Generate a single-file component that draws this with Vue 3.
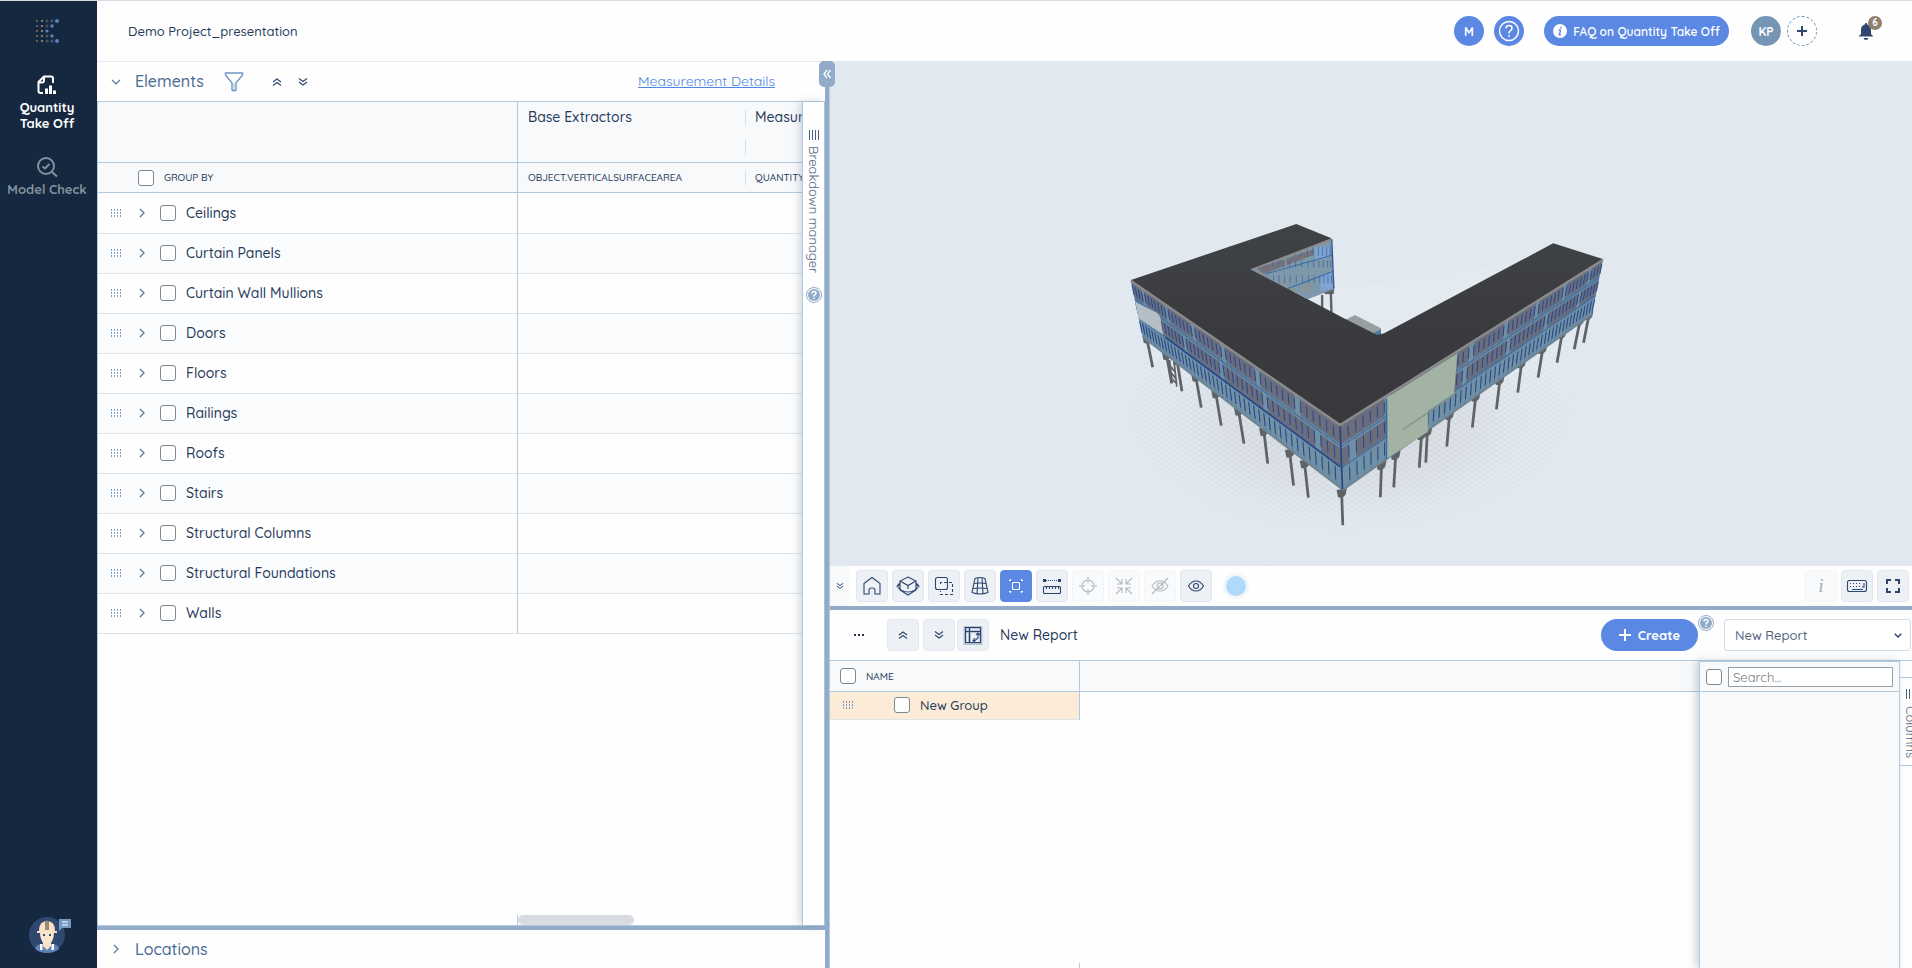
<template>
  <div class="app">
    <nav class="sidebar">
      <svg class="logo" viewBox="0 0 24 24" aria-hidden="true">
        <circle v-for="dot in logoDots" :key="dot.id" :cx="dot.x" :cy="dot.y" :r="dot.r" :fill="dot.color" />
      </svg>
      <a href="#" class="nav-item active">
        <svg width="20" height="20" viewBox="0 0 20 20" aria-hidden="true">
          <path d="M6 18H3.500Q1.500 18 1.500 16V7L7 1.500H14Q16 1.500 16 3.500V8M1.500 7.500H5Q7 7.500 7 5.500V2" fill="none" stroke="#fff" stroke-width="2" />
          <path d="M8 13.500h3V19H8zM12 10.500h3V19h-3zM16 15.500h3V19h-3z" fill="#fff" />
        </svg>
        <span>Quantity Take Off</span>
      </a>
      <a href="#" class="nav-item check">
        <svg width="22" height="20" viewBox="0 0 22 20" fill="none" stroke="currentColor" stroke-width="2" aria-hidden="true">
          <circle cx="10" cy="9" r="8" />
          <path d="M16 15l5 4.500M6.500 9.500l2.500 2 4.500-4.500" />
        </svg>
        <span>Model Check</span>
      </a>
      <button class="assistant" aria-label="Assistant">
        <svg width="44" height="40" viewBox="0 0 44 40">
          <circle cx="19" cy="20" r="18" fill="#2f4870" />
          <path d="M7 34Q8 29 14 29h10q6 0 7 5-5 4-12 4T7 34z" fill="#5c83b8" />
          <path d="M12 29h2.500v6H12zM23.500 29H26v6h-2.500z" fill="#fff" />
          <path d="M15 25h8v6l-4 4-4-4z" fill="#f9dfc5" />
          <path d="M12 17h14q0 8-4 12l-3 2-3-2q-4-4-4-12z" fill="#fce5ce" />
          <path d="M11 16Q11 6 19 6t8 10h2v2H9v-2z" fill="#fbe0c3" />
          <path d="M17 6q2-1 4 0v9h-4z" fill="#998876" />
          <path d="M15 19h2v2h-2zM21 19h2v2h-2z" fill="#385078" />
          <path d="M31 4h12v9H34l-3 3z" fill="#7599c2" />
          <path d="M34 7h6M34 10h6" stroke="#fff" />
        </svg>
      </button>
    </nav>

    <header class="topbar">
      <span class="project">Demo Project_presentation</span>
      <div class="top-actions">
        <button class="round blue">M</button>
        <button class="round blue" aria-label="Help">
          <svg width="22" height="22" viewBox="0 0 22 22" fill="none" stroke="#fff" stroke-width="1.500">
            <circle cx="11" cy="11" r="9.500" />
            <path d="M8 8.500Q8 5.500 11 5.500t3 2.700Q14 10 12 11q-1 .7-1 2.500M11 15v1.700" />
          </svg>
        </button>
        <button class="faq">
          <svg width="14" height="14" viewBox="0 0 14 14" aria-hidden="true">
            <circle cx="7" cy="7" r="7" fill="#fff" />
            <path d="M8 3l-.3 1.500M7.500 6l-1 4.500M5.700 6h2M5.500 10.700h2.300" stroke="#5a88e3" stroke-width="1.400" fill="none" />
          </svg>
          FAQ on Quantity Take Off
        </button>
        <button class="round user">KP</button>
        <button class="round add" aria-label="Add user">
          <svg width="10" height="10" viewBox="0 0 10 10"><path d="M5 0v10M0 5h10" stroke="#2f486f" stroke-width="2" /></svg>
        </button>
        <button class="bell" aria-label="Notifications">
          <svg width="16" height="17" viewBox="0 0 16 17" fill="#2e466e">
            <path d="M8 0q1.200 0 1.200 1.400Q13 2.500 13 7v4l2.500 2.500H.5L3 11V7Q3 2.500 6.800 1.400 6.800 0 8 0zM5.500 15h5q-.5 2-2.500 2t-2.500-2z" />
          </svg>
          <span class="badge">6</span>
        </button>
      </div>
    </header>

    <section class="left-pane">
      <div class="pane-head">
        <button class="bare" aria-label="Collapse elements">
          <svg width="10" height="6" viewBox="0 0 10 6" class="line-icon"><path d="M1 1l4 4 4-4" /></svg>
        </button>
        <h2>Elements</h2>
        <button class="bare filter" aria-label="Filter">
          <svg width="20" height="20" viewBox="0 0 20 20" fill="none" stroke="#6f97c4" stroke-width="1.400">
            <path d="M1.500 1h17v2L12 11v7l-2 1-2-1v-7L1.500 3z" />
            <path d="M10 11v7" stroke="#a9d3f2" />
          </svg>
        </button>
        <button class="bare up" aria-label="Collapse all"><svg width="10" height="8" viewBox="0 0 10 8" class="double"><path :d="doubleUp" /></svg></button>
        <button class="bare" aria-label="Expand all"><svg width="10" height="8" viewBox="0 0 10 8" class="double"><path :d="doubleDown" /></svg></button>
        <a href="#" class="details">Measurement Details</a>
      </div>

      <div class="elements-body">
        <div class="table-wrap">
          <table class="elements">
            <colgroup>
              <col class="col-name" />
              <col class="col-base" />
              <col />
            </colgroup>
            <thead>
              <tr class="groups">
                <th></th>
                <th>Base Extractors</th>
                <th class="ticked">Measurements</th>
              </tr>
              <tr class="fields">
                <th>
                  <label class="group-by"><input type="checkbox" /> GROUP BY</label>
                </th>
                <th>OBJECT.VERTICALSURFACEAREA</th>
                <th class="ticked">QUANTITY</th>
              </tr>
            </thead>
            <tbody>
              <tr v-for="name in elements" :key="name">
                <td>
                  <div class="row-name">
                    <svg width="12" height="8" viewBox="0 0 12 8" class="grip"><path :d="grip" /></svg>
                    <button class="bare" :aria-label="'Expand ' + name">
                      <svg width="6" height="10" viewBox="0 0 6 10" class="line-icon"><path d="M1 1l4 4-4 4" /></svg>
                    </button>
                    <label><input type="checkbox" /> {{ name }}</label>
                  </div>
                </td>
                <td></td>
                <td></td>
              </tr>
            </tbody>
          </table>
          <div class="scroll-row"><div class="thumb"></div></div>
        </div>
        <div class="side-tab">
          <svg width="10" height="10" viewBox="0 0 10 10" class="bars"><path d="M.5 0v10M3.500 0v10M6.500 0v10M9.500 0v10" /></svg>
          <button class="vertical">Breakdown manager</button>
          <button class="bare" aria-label="Breakdown manager help">
            <svg width="16" height="16" viewBox="0 0 16 16"><circle cx="8" cy="8" r="7.500" fill="#fff" stroke="#92abc8" /><circle cx="8" cy="8" r="6" fill="#92abc8" /><path :d="question" class="question" /></svg>
          </button>
        </div>
      </div>

      <div class="split-h"></div>
      <div class="locations">
        <button class="bare" aria-label="Expand locations">
          <svg width="6" height="10" viewBox="0 0 6 10" class="line-icon"><path d="M1 1l4 4-4 4" /></svg>
        </button>
        <h2>Locations</h2>
      </div>
    </section>

    <div class="split-v">
      <button class="collapse" aria-label="Collapse panel">
        <svg width="8" height="10" viewBox="0 0 8 10" fill="none" stroke="#fff" stroke-width="1.300"><path d="M4 1L1 5l3 4M7.500 1l-3 4 3 4" /></svg>
      </button>
    </div>

    <section class="right-pane">
      <div class="viewer">
        <svg viewBox="0 0 1082 504" role="img" aria-label="Building model">
          <defs>
            <radialGradient id="shade">
              <stop offset="0" stop-color="#d4d8dd" />
              <stop offset=".55" stop-color="#dbe0e5" stop-opacity=".8" />
              <stop offset="1" stop-color="#e3eaf1" stop-opacity="0" />
            </radialGradient>
            <radialGradient id="glow">
              <stop offset=".4" stop-color="#e6eff6" />
              <stop offset="1" stop-color="#e2e9f0" stop-opacity="0" />
            </radialGradient>
            <radialGradient id="fade">
              <stop offset="0" stop-color="#fff" />
              <stop offset=".5" stop-color="#fff" stop-opacity=".55" />
              <stop offset="1" stop-color="#fff" stop-opacity="0" />
            </radialGradient>
            <pattern id="grid" width="24" height="16" patternUnits="userSpaceOnUse">
              <path d="M0 0L24 16M24 0L0 16" stroke="#adb3bc" stroke-width="1.500" fill="none" />
            </pattern>
            <mask id="gridMask"><ellipse cx="730" cy="620" rx="820" ry="430" fill="url(#fade)" /></mask>
            <linearGradient id="roof" x1="0" y1="0" x2="0" y2="1">
              <stop offset="0" stop-color="#404345" />
              <stop offset=".5" stop-color="#3a3b3f" />
              <stop offset="1" stop-color="#37393b" />
            </linearGradient>
            <clipPath id="backClip"><path d="M438 207L672 117 680 268 604 298z" /></clipPath>
          </defs>
          <g transform="translate(270 138) scale(.3444 .3333)">
            <ellipse cx="730" cy="620" rx="950" ry="520" fill="url(#glow)" />
            <ellipse cx="720" cy="660" rx="680" ry="380" fill="url(#shade)" />
            <rect x="-200" y="200" width="1900" height="850" fill="url(#grid)" mask="url(#gridMask)" opacity=".7" />
            <path d="M604 298L690 268 1200 190 820 410z" fill="#e4ebf1" opacity=".8" />

            <g stroke="#5f6365" fill="#5f6365">
              <g v-for="(c, i) in columns" :key="i">
                <path :d="`M${c[0]} ${c[1]}L${c[2]} ${c[3]}`" stroke-width="8" />
                <path :d="`M${c[0] - 15} ${c[1] - 18}l30 -6 -4 20 -10 10 -12 -2z`" stroke="none" />
              </g>
              <path d="M202 480l8 70M215 485l8 75M206 500l12 16M208 520l12 16M210 538l12 12" stroke-width="5" />
              <path d="M645 285V325M670 270L672 338" stroke-width="7" />
              <path d="M650 270l30 -6 -2 18h-25z" />
            </g>

            <g clip-path="url(#backClip)">
              <path d="M438 207L672 117 680 268 604 298z" fill="#7c98aa" />
              <path d="M455 205L620 148 620 165 475 222z" fill="#74737c" />
              <path d="M530 235h12v22h-12zM595 250h14v25h-14zM550 265h12v20h-12zM535 175h6v25h-6z" fill="#94928a" />
              <path d="M625 140h45v30l-45 12zM640 225l35-10v50l-35 10z" fill="#7fa4d1" />
              <path d="M480 222L676 165M540 268L678 214" class="floor-line" />
              <path v-for="x in backMullions" :key="x" :d="`M${x} 140v28m2 14v20m2 24v24`" stroke="#3a63a0" stroke-width="2" />
            </g>
            <path d="M438 207L672 117" stroke="#8f8b89" stroke-width="8" />
            <path d="M673 118L679 265" stroke="#2f569c" stroke-width="4" />

            <path d="M712 360L740 345 816 385 814 405 795 408z" fill="#999fa1" />
            <path d="M790 402L816 388V406H798z" fill="#4d78a8" />

            <g v-for="face in faces" :key="face.id">
              <path :d="face.outline" fill="#7290a3" />
              <path :d="face.rooms" fill="#6b6d7b" />
              <path :d="face.glints" fill="#6e93a6" />
              <path :d="face.mullions" stroke="#4577ab" stroke-width="2" stroke-opacity=".8" fill="none" />
              <path :d="face.darkMullions" stroke="#2b4788" stroke-width="3" fill="none" />
              <path :d="face.floors" class="floor-line" />
              <path :d="face.base" stroke="#6f8394" stroke-width="5" fill="none" />
            </g>
            <path d="M190 412L697 800" stroke="#26468a" stroke-width="5" />
            <path d="M697 675L704 868" stroke="#254788" stroke-width="5" />
            <path d="M102 305L165 338Q176 345 177 365L184 405 112 355z" fill="#b4bfc5" />
            <path d="M834 592L1038 460 1028 580 952 633V695L834 775z" fill="#a3b3a3" />
            <path d="M878 690L1028 585" stroke="#858f89" stroke-width="4" />
            <path d="M832 598V778" stroke="#3769ad" stroke-width="4" />

            <path d="M90 240L570 72 672 115 438 207 708 355 805 405 825 400 1316 130 1460 177 697 672z" fill="url(#roof)" />
            <path d="M90 243L697 675 1460 180" fill="none" stroke="#8b8989" stroke-width="7" />
            <path d="M438 207L500 240" stroke="#8b8989" stroke-width="4" />
          </g>
        </svg>
      </div>

      <div class="toolbar">
        <button class="toggle" aria-label="Hide toolbar"><svg width="8" height="8" viewBox="0 0 10 8" class="double"><path :d="doubleDown" /></svg></button>
        <button class="tool" aria-label="Home"><svg viewBox="0 0 24 24"><path d="M4 9.500L12 3.500l8 6V20h-5v-4q0-2-3-2t-3 2v4H4z" /></svg></button>
        <button class="tool" aria-label="Section box"><svg viewBox="0 0 24 24"><path d="M12 3l8 4v9l-8 5-8-5V7zM4 7l8 4.500L20 7M12 11.500V15M4 9L1 12q4 6 11 6t11-6l-3-3M1 12l3-1M23 12l-3-1" /></svg></button>
        <button class="tool" aria-label="Select area"><svg viewBox="0 0 24 24"><rect x="3.500" y="3.500" width="12" height="12" rx="2" /><path d="M8.500 10V8.500H20.500V20.500H8.500V17" stroke-dasharray="3 2" /></svg></button>
        <button class="tool" aria-label="Grid"><svg viewBox="0 0 24 24"><path d="M7 4.500Q12 2.500 17 4.500L20 18.500q-8 3-16 0zM6 9.500q6-1 12 0M5 14.500q7-1 14 0M10 4L9 20M14 4l1 16" /></svg></button>
        <button class="tool selected" aria-label="Isolate"><svg viewBox="0 0 24 24"><rect x="8.500" y="8.500" width="7" height="7" rx="1" /><path d="M5 6.500h1.500V5M19 6.500h-1.500V5M5 17.500h1.500V19M19 17.500h-1.500V19" /></svg></button>
        <button class="tool" aria-label="Measure"><svg viewBox="0 0 24 24"><rect x="3.500" y="12.500" width="17" height="7" rx="1" /><path d="M6.500 12v3M9.500 12v3M12.500 12v3M15.500 12v3M18.500 12v3" /><path d="M6 6.500h12" stroke-dasharray="1 1" /><path d="M3 5h3v3H3zM18 5h3v3h-3z" fill="currentColor" stroke="none" /></svg></button>
        <button class="tool" disabled aria-label="Locate"><svg viewBox="0 0 24 24"><circle cx="12" cy="12" r="6" /><path d="M12 3v6M12 15v6M3 12h6M15 12h6" /></svg></button>
        <button class="tool" disabled aria-label="Fit"><svg viewBox="0 0 24 24"><path d="M4 4l6 6M20 4l-6 6M4 20l6-6M20 20l-6-6M10 5v5H5M14 5v5h5M5 14h5v5M19 14h-5v5" /></svg></button>
        <button class="tool" disabled aria-label="Hide"><svg viewBox="0 0 24 24"><path d="M4 12q3-5 8-5t8 5q-3 5-8 5t-8-5zM4 20L20 4" /><circle cx="12" cy="12" r="3" /></svg></button>
        <button class="tool" aria-label="Show"><svg viewBox="0 0 24 24"><path d="M4.500 12q3-5 7.500-5t7.500 5q-3 5-7.500 5t-7.500-5z" /><circle cx="12" cy="12" r="2.500" /></svg></button>
        <button class="swatch" aria-label="Colour"></button>
        <button class="tool info" disabled aria-label="Info">i</button>
        <button class="tool" aria-label="Keyboard"><svg viewBox="0 0 24 24"><rect x="2.500" y="6.500" width="19" height="11" rx="2" /><path d="M5 9.500h12M5 12.500h12" stroke-dasharray="1 2" /><path d="M7 15.500h11M19 9v4h-2" /></svg></button>
        <button class="tool" aria-label="Fullscreen"><svg viewBox="0 0 24 24"><path d="M6 10V6h4M14 6h4v4M18 14v4h-4M10 18H6v-4" stroke-width="2" /></svg></button>
      </div>

      <div class="split-h"></div>

      <div class="report-bar">
        <button class="bare more" aria-label="More"><svg width="10" height="2" viewBox="0 0 10 2"><path d="M0 0h2v2H0zM4 0h2v2H4zM8 0h2v2H8z" fill="#26334d" /></svg></button>
        <button class="tool" aria-label="Collapse report"><svg class="double small" viewBox="0 0 10 8"><path :d="doubleUp" /></svg></button>
        <button class="tool" aria-label="Expand report"><svg class="double small" viewBox="0 0 10 8"><path :d="doubleDown" /></svg></button>
        <button class="tool pivot" aria-label="Pivot"><svg viewBox="0 0 24 24"><path d="M4 4.500h16v16H4zM4 8.500h16M8.500 4v16" stroke="#b4c2d6" stroke-width="3" /><path d="M4.500 4.500h15v15h-15zM4.500 8.500h15M8.500 4.500v15" /><path d="M17 10.500v4.500l-3 2.500h-2M15 12l2-2 2 2M14 15l-2 2.500 2 2" /></svg></button>
        <span class="report-title">New Report</span>
        <button class="create">
          <svg width="12" height="12" viewBox="0 0 12 12"><path d="M6 0v12M0 6h12" stroke="#fff" stroke-width="2" /></svg>
          Create
        </button>
        <button class="bare report-help" aria-label="Report help">
          <svg width="16" height="16" viewBox="0 0 16 16"><circle cx="8" cy="8" r="7.500" fill="#fff" stroke="#92abc8" /><circle cx="8" cy="8" r="6" fill="#92abc8" /><path :d="question" class="question" /></svg>
        </button>
        <div class="select-wrap">
          <select v-model="report" aria-label="Report">
            <option>New Report</option>
          </select>
          <svg width="8" height="5" viewBox="0 0 8 5" fill="none" stroke="#26406b" stroke-width="1.400"><path d="M.8.8L4 4 7.200.8" /></svg>
        </div>
      </div>

      <div class="report-body">
        <div class="report-grid">
          <table class="report">
            <colgroup>
              <col class="col-report" />
              <col />
            </colgroup>
            <thead>
              <tr>
                <th><label><input type="checkbox" /> NAME</label></th>
                <th></th>
              </tr>
            </thead>
            <tbody>
              <tr>
                <td>
                  <div class="row-name">
                    <svg width="12" height="8" viewBox="0 0 12 8" class="grip"><path :d="grip" /></svg>
                    <label><input type="checkbox" /> New Group</label>
                  </div>
                </td>
                <td></td>
              </tr>
            </tbody>
          </table>
          <div class="report-foot"></div>
        </div>
        <aside class="columns-panel">
          <div class="search-row">
            <input type="checkbox" aria-label="Select all columns" />
            <input v-model="search" type="text" class="search" placeholder="Search..." aria-label="Search columns" />
          </div>
        </aside>
        <div class="columns-rail">
          <div class="columns-tab">
            <svg width="10" height="10" viewBox="0 0 10 10" class="bars"><path d="M.5 0v10M3.500 0v10M6.500 0v10M9.500 0v10" /></svg>
            <button class="vertical">Columns</button>
          </div>
        </div>
      </div>
    </section>
  </div>
</template>

<script setup>
import { ref } from "vue";

const report = ref("New Report");
const search = ref("");

const elements = [
  "Ceilings",
  "Curtain Panels",
  "Curtain Wall Mullions",
  "Doors",
  "Floors",
  "Railings",
  "Roofs",
  "Stairs",
  "Structural Columns",
  "Structural Foundations",
  "Walls",
];

const doubleUp = "M1 4l4-3 4 3M1 7.500l4-3 4 3";
const doubleDown = "M1 .5l4 3 4-3M1 4l4 3 4-3";
const question = "M6 6.500Q6 4.500 8 4.500t2 1.800Q10 7.500 8 8.500v1M8 10.500v1.500";
const grip = [0, 3, 6].map((y) => [0, 3, 6, 9].map((x) => `M${x + 1.5} ${y}v2`).join("")).join("");

const logoStyles = [
  { r: 0.8, color: "#c9a978" },
  { r: 1.1, color: "#a38c72" },
  { r: 1.6, color: "#4c505a" },
  { r: 1.7, color: "#46536a" },
  { r: 2, color: "#5a83b6" },
];
const logoRows = [5, 4, 3, 4, 5];
const logoDots = logoRows.flatMap((count, row) =>
  logoStyles.slice(0, count).map((style, col) => ({
    id: `${row}-${col}`,
    x: 2 + col * 5,
    y: 2 + row * 5,
    r: style.r,
    color: col === count - 1 ? "#5a83b6" : style.color,
  }))
);

const backMullions = [480, 500, 516, 532, 548, 566, 584, 602, 618, 634, 646, 658, 668];

// x/y of the head and of the foot of each column
const columns = [
  [138, 425, 153, 502],
  [195, 475, 208, 550],
  [225, 490, 238, 574],
  [280, 540, 294, 623],
  [338, 590, 352, 677],
  [404, 642, 418, 731],
  [477, 703, 487, 791],
  [552, 768, 562, 857],
  [595, 800, 605, 893],
  [702, 888, 705, 976],
  [817, 805, 814, 892],
  [858, 775, 853, 862],
  [933, 715, 927, 803],
  [950, 705, 946, 788],
  [1014, 655, 1007, 740],
  [1090, 600, 1081, 683],
  [1160, 550, 1151, 628],
  [1223, 500, 1213, 578],
  [1284, 457, 1272, 533],
  [1340, 412, 1327, 488],
  [1392, 372, 1377, 448],
  [1418, 355, 1404, 428],
];

// Builds the path data of a glazed facade: a and b are the far top and bottom, c and d the near ones
const facade = (id, a, b, c, d, count) => {
  const depth = 1.55;
  const mix = (from, to, t) => from + (to - from) * t;
  const point = (u, v) => {
    // spacing widens towards the near corner
    const p = u / (u + (1 - u) * depth);
    const x = mix(mix(a[0], c[0], p), mix(b[0], d[0], p), v);
    const y = mix(mix(a[1], c[1], p), mix(b[1], d[1], p), v);
    return `${x.toFixed(1)} ${y.toFixed(1)}`;
  };
  const line = (u0, v0, u1, v1) => `M${point(u0, v0)}L${point(u1, v1)}`;
  const cell = (u0, u1, v0, v1) =>
    `M${point(u0, v0)}L${point(u1, v0)}L${point(u1, v1)}L${point(u0, v1)}z`;

  let rooms = "";
  let glints = "";
  let mullions = "";
  let darkMullions = "";
  for (let i = 0; i < count; i++) {
    const u0 = i / count;
    const u1 = (i + 1) / count;
    if (i % 7 !== 3) rooms += cell(u0, u1, 0.03, 0.31);
    if (i % 9 !== 5) rooms += cell(u0, u1, 0.38, 0.65);
    if (i % 4 === 1) glints += cell(u0, u1, 0.68, 0.92);
    mullions += line(u0, 0, u0, 1);
    darkMullions += line(u0, 0.09, u0, 0.26) + line(u0, 0.4, u0, 0.58) + line(u0, 0.72, u0, 0.92);
  }
  return {
    id,
    outline: cell(0, 1, 0, 1),
    rooms,
    glints,
    mullions,
    darkMullions,
    floors: line(0, 0.34, 1, 0.34) + line(0, 0.66, 1, 0.66),
    base: line(0, 1, 1, 1),
  };
};

const faces = [
  facade("west", [90, 240], [125, 412], [697, 672], [705, 870], 45),
  facade("south", [1460, 177], [1427, 345], [697, 672], [705, 870], 52),
];
</script>

<style>
body {
  margin: 0;
}
</style>

<style scoped>
.app {
  display: grid;
  grid-template-columns: 97px minmax(0, 728fr) 5px minmax(0, 1082fr);
  grid-template-rows: 62px minmax(0, 1fr);
  height: 100vh;
  box-sizing: border-box;
  overflow: hidden;
  background: #fefefe;
  color: #25395a;
  font-family: Quicksand, Lato, "Open Sans", sans-serif;
  font-size: 14px;
  font-weight: 500;
}

.app *,
.app *::before {
  box-sizing: border-box;
}

button {
  padding: 0;
  border: none;
  background: none;
  font: inherit;
  color: inherit;
  display: flex;
  align-items: center;
  justify-content: center;
  cursor: pointer;
}

h2 {
  margin: 0;
  font-size: 16px;
  font-weight: 500;
  color: #476a92;
}

input[type="checkbox"] {
  appearance: none;
  flex: none;
  width: 16px;
  height: 16px;
  margin: 0;
  border: 1px solid #7b8791;
  border-radius: 3px;
  background: #fff;
}

label {
  display: flex;
  align-items: center;
}

/* Sidebar */
.sidebar {
  grid-row: 1 / 3;
  display: flex;
  flex-direction: column;
  align-items: center;
  border-top: 1px solid #d5dae0;
  background: #152840;
  padding: 18px 3px 13px 0;
}

.logo {
  width: 24px;
  height: 24px;
  margin-bottom: 32px;
}

.nav-item {
  display: flex;
  flex-direction: column;
  align-items: center;
  gap: 4px;
  width: 90px;
  text-align: center;
  text-decoration: none;
  font-size: 13px;
  line-height: 16px;
  font-weight: 700;
  color: #fff;
}

.active span {
  width: 64px;
}

.check {
  margin-top: 26px;
  color: #81929d;
}

.assistant {
  margin-top: auto;
  padding-left: 6px;
}

/* Top bar */
.topbar {
  grid-column: 2 / 5;
  display: flex;
  align-items: center;
  justify-content: space-between;
  border-top: 1px solid #d5dae0;
  border-bottom: 1px solid #e6eaee;
  padding: 0 30px 0 31px;
}

.project {
  font-size: 13px;
}

.top-actions {
  display: flex;
  align-items: center;
}

.round {
  width: 30px;
  height: 30px;
  border-radius: 50%;
  font-size: 12px;
  font-weight: 700;
  color: #fff;
}

.blue {
  margin-right: 10px;
  background: #5a88e3;
}

.faq {
  width: 185px;
  height: 30px;
  gap: 6px;
  margin: 0 22px 0 10px;
  border-radius: 15px;
  background: #5a88e3;
  color: #fff;
  font-size: 12px;
  font-weight: 600;
  white-space: nowrap;
}

.user {
  margin-right: 6px;
  background: #7694b4;
}

.add {
  border: 1px dashed #6f93b9;
}

.bell {
  position: relative;
  width: 24px;
  height: 30px;
  margin-left: 41px;
  justify-content: flex-start;
}

.badge {
  position: absolute;
  top: 0;
  right: 0;
  width: 14px;
  height: 14px;
  border-radius: 50%;
  background: #8f8072;
  color: #fff;
  font-size: 10px;
  line-height: 14px;
  font-weight: 700;
}

/* Elements pane */
.left-pane {
  display: flex;
  flex-direction: column;
  min-height: 0;
}

.pane-head {
  display: flex;
  align-items: center;
  height: 39px;
  padding: 0 50px 0 14px;
}

.pane-head h2 {
  margin-left: 14px;
  padding-bottom: 2px;
}

.filter {
  margin: 0 28px 0 20px;
}

.up {
  margin-right: 16px;
}

.details {
  margin-left: auto;
  padding-bottom: 2px;
  font-weight: 400;
  color: #4d87e2;
}

.line-icon {
  fill: none;
  stroke: #5b7690;
  stroke-width: 1.2;
}

.double {
  fill: none;
  stroke: #2e4a77;
  stroke-width: 1.2;
}

.elements-body {
  flex: 1;
  display: flex;
  min-height: 0;
  border: 1px solid #b2cadd;
}

.table-wrap {
  flex: 1;
  display: flex;
  flex-direction: column;
  min-width: 0;
  overflow: hidden;
}

table {
  width: 100%;
  table-layout: fixed;
  border-collapse: separate;
  border-spacing: 0;
}

th,
td {
  padding: 0;
  text-align: left;
  font-weight: 500;
  white-space: nowrap;
}

.col-name {
  width: 420px;
}

.col-base {
  width: 227px;
}

.elements th {
  position: relative;
  background: #f8f9fb;
  border-bottom: 1px solid #b2cadd;
}

.elements th:first-child,
.elements td:first-child {
  border-right: 1px solid #b2cadd;
}

.elements th + th {
  padding-left: 10px;
}

.elements .groups th {
  height: 61px;
  padding-bottom: 31px;
}

.fields th {
  height: 30px;
  font-size: 10px;
}

.ticked::before {
  content: "";
  position: absolute;
  left: 0;
  top: 8px;
  bottom: 7px;
  width: 1px;
  background: #d2dde8;
}

.groups .ticked::before {
  background: linear-gradient(#d2dde8 15px, transparent 15px 30px, #d2dde8 30px);
}

.group-by {
  gap: 10px;
  padding-left: 40px;
}

.elements td {
  height: 40px;
  padding-bottom: 1px;
  border-bottom: 1px solid #dae5ee;
}

.elements tbody tr:first-child td {
  height: 41px;
}

.elements tbody tr:nth-child(even) {
  background: #fbfcfd;
}

.row-name {
  display: flex;
  align-items: center;
  padding-left: 12px;
}

.row-name .bare {
  width: 6px;
  margin: 0 15px 0 17px;
}

.row-name label {
  gap: 10px;
}

.grip {
  fill: none;
  stroke: #7d9cc2;
  stroke-width: 1;
}

.scroll-row {
  margin: auto 0 0 419px;
  height: 10px;
  border-left: 1px solid #b2cadd;
}

.thumb {
  width: 116px;
  height: 10px;
  border-radius: 5px;
  background: #d8dce2;
}

.side-tab {
  flex: none;
  position: relative;
  display: flex;
  flex-direction: column;
  align-items: center;
  width: 22px;
  padding-top: 28px;
  gap: 6px;
  border-left: 1px solid #b2cadd;
  background: #fefefe;
  box-shadow: -2px 0 8px rgba(100, 130, 160, 0.35);
}

.bars {
  flex: none;
  stroke: #48617e;
}

.vertical {
  writing-mode: vertical-rl;
  color: #52677f;
  line-height: 18px;
  font-size: 13px;
  font-weight: 400;
}

.side-tab .bare {
  margin-top: 8px;
}

.question {
  fill: none;
  stroke: #fff;
  stroke-width: 1.4;
}

.split-h {
  flex: none;
  height: 4px;
  background: #92abc8;
}

.locations {
  display: flex;
  align-items: center;
  gap: 16px;
  height: 38px;
  padding-left: 16px;
}

/* Vertical splitter */
.split-v {
  position: relative;
  background: #92abc8;
  border-right: 1px solid #b8cadb;
}

.collapse {
  position: absolute;
  left: -6px;
  top: -1px;
  z-index: 2;
  width: 16px;
  height: 26px;
  border-radius: 5px;
  background: #92abc8;
}

/* Viewer */
.right-pane {
  display: flex;
  flex-direction: column;
  min-width: 0;
  min-height: 0;
}

.viewer {
  flex: 504;
  min-height: 0;
  overflow: hidden;
  background: #e1e8ef;
}

.viewer svg {
  display: block;
  width: 100%;
  height: 100%;
}

.floor-line {
  fill: none;
  stroke: #3c6aa3;
  stroke-width: 3;
}

.toolbar {
  flex: none;
  display: flex;
  align-items: center;
  gap: 4px;
  height: 40px;
  padding-right: 3px;
}

.toggle {
  width: 19px;
  height: 40px;
  margin-right: 3px;
  background: #f7f9fb;
}

.tool {
  flex: none;
  width: 32px;
  height: 32px;
  border: 1px solid #e1e8ef;
  border-radius: 4px;
  background: #edf0f5;
  color: #2e466e;
}

.tool svg {
  width: 24px;
  height: 24px;
  fill: none;
  stroke: currentColor;
  stroke-width: 1.1;
}

.tool .small {
  width: 10px;
  height: 8px;
}

.tool:disabled {
  background: #f9fafc;
  border-color: #f3f6f9;
  color: #b3bac3;
}

.tool.selected {
  border-color: #5a88e3;
  background: #5a88e3;
  color: #fff;
}

.swatch {
  width: 26px;
  height: 26px;
  margin: 0 auto 0 7px;
  border: 3px solid #f3f6f9;
  border-radius: 50%;
  background: #b0dafb;
}

.tool.info {
  color: #a3abb5;
  font-family: "Liberation Serif", serif;
  font-size: 18px;
  font-style: italic;
}

/* Report */
.report-bar {
  flex: none;
  display: flex;
  align-items: center;
  gap: 4px;
  height: 50px;
  padding: 0 1px 0 24px;
}

.more {
  width: 10px;
  margin-right: 19px;
}

.pivot {
  margin-left: -2px;
}

.report-title {
  margin-left: 7px;
}

.create {
  width: 97px;
  height: 32px;
  margin-left: auto;
  gap: 7px;
  border-radius: 16px;
  background: #5a88e3;
  color: #fff;
  font-size: 13px;
  font-weight: 700;
}

.report-help {
  align-self: flex-start;
  margin: 5px 6px 0 -4px;
}

.select-wrap {
  position: relative;
  display: flex;
  align-items: center;
  width: 187px;
}

.select-wrap select {
  appearance: none;
  width: 100%;
  height: 32px;
  padding: 0 10px;
  border: 1px solid #cfdde9;
  border-radius: 3px;
  background: #fff;
  font: inherit;
  font-size: 13px;
  color: #50657e;
}

.select-wrap svg {
  position: absolute;
  right: 9px;
  pointer-events: none;
}

.report-body {
  flex: 307;
  display: flex;
  min-height: 0;
  border-top: 1px solid #b2cadd;
}

.report-grid {
  flex: 1;
  display: flex;
  flex-direction: column;
  min-width: 0;
}

.col-report {
  width: 250px;
}

.report th {
  height: 31px;
  background: #f8f9fb;
  border-bottom: 1px solid #b2cadd;
  font-size: 10px;
}

.report th:first-child,
.report td:first-child {
  border-right: 1px solid #b2cadd;
}

.report th label {
  gap: 10px;
  padding-left: 10px;
}

.report td {
  height: 28px;
  padding-bottom: 1px;
  font-size: 13px;
}

.report td:first-child {
  background: #fcebd6;
  border-bottom: 1px solid #dae5ee;
}

.report .row-name label {
  margin-left: 40px;
}

.report-foot {
  width: 250px;
  height: 5px;
  margin-top: auto;
  border-right: 1px solid #b2cadd;
}

.columns-panel {
  position: relative;
  width: 201px;
  border-left: 1px solid #b2cadd;
  border-right: 1px solid #b2cadd;
  background: #f8f9fb;
  box-shadow: -3px 0 8px rgba(100, 130, 160, 0.35);
}

.search-row {
  display: flex;
  align-items: center;
  gap: 6px;
  height: 31px;
  padding: 0 6px;
  border-top: 1px solid #b2cadd;
  border-bottom: 1px solid #b2cadd;
}

.search {
  flex: 1;
  min-width: 0;
  height: 20px;
  padding: 0 4px;
  border: 1px solid #96a0a9;
  background: #fff;
  font: inherit;
  font-size: 13px;
  font-weight: 400;
  outline: none;
}

.search::placeholder {
  color: #75797f;
}

.columns-rail {
  position: relative;
  width: 12px;
  padding-top: 16px;
  overflow: hidden;
}

.columns-tab {
  display: flex;
  flex-direction: column;
  align-items: center;
  gap: 7px;
  width: 21px;
  height: 89px;
  padding-top: 11px;
  border-top: 1px solid #b2cadd;
  border-bottom: 1px solid #b2cadd;
}
</style>
